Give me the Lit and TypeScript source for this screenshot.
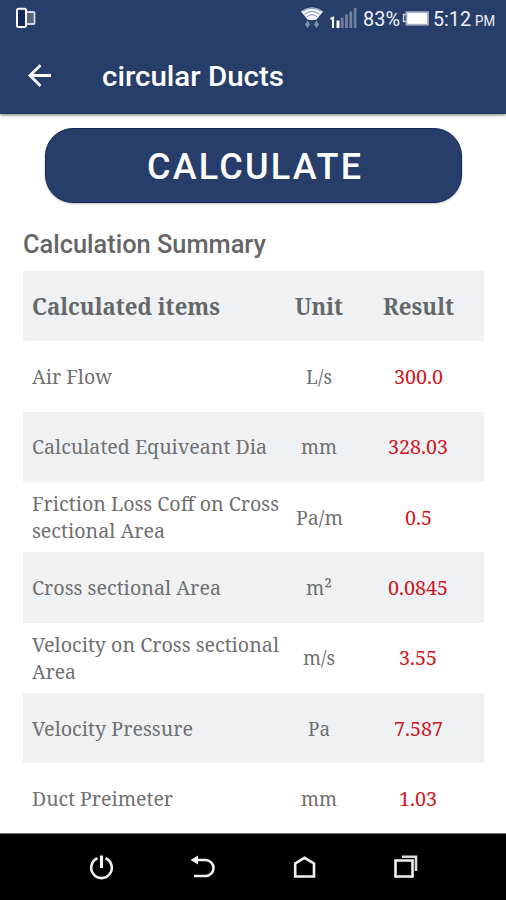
import { LitElement, html, css, svg } from "lit";
import { customElement, property } from "lit/decorators.js";

type Line = [text: string, width: number];
interface Row {
  name: Line[];
  unit: Line;
  result: Line;
}

const HEADER: Row = { name: [["Calculated items", 188]], unit: ["Unit", 48], result: ["Result", 71] };
const ROWS: Row[] = [
  { name: [["Air Flow", 80]], unit: ["L/s", 26], result: ["300.0", 49] },
  { name: [["Calculated Equiveant Dia", 235]], unit: ["mm", 36], result: ["328.03", 60] },
  { name: [["Friction Loss Coff on Cross", 247], ["sectional Area", 133]], unit: ["Pa/m", 47], result: ["0.5", 27] },
  { name: [["Cross sectional Area", 189]], unit: ["m²", 26], result: ["0.0845", 60] },
  { name: [["Velocity on Cross sectional", 247], ["Area", 44]], unit: ["m/s", 32], result: ["3.55", 38] },
  { name: [["Velocity Pressure", 161]], unit: ["Pa", 22], result: ["7.587", 49] },
  { name: [["Duct Preimeter", 141]], unit: ["mm", 36], result: ["1.03", 38] },
];

/** One line of text set to an exact advance width. */
@customElement("fit-text")
export class FitText extends LitElement {
  @property() text = "";
  @property({ type: Number }) width = 0;
  @property({ type: Number }) line = 27;
  @property({ type: Number }) base = 20;

  static styles = css`
    :host { display: block; }
    svg { display: block; overflow: visible; }
    text { fill: currentColor; }
  `;

  render() {
    return html`<svg width=${this.width} height=${this.line}>
      ${svg`<text x="0" y=${this.base} textLength=${this.width} lengthAdjust="spacingAndGlyphs">${this.text}</text>`}
    </svg>`;
  }
}

@customElement("app-root")
export class AppRoot extends LitElement {
  static styles = css`
    :host {
      display: flex;
      flex-direction: column;
      width: 506px;
      height: 900px;
      overflow: hidden;
      background: #fff;
      font-family: Roboto, sans-serif;
    }
    svg { display: block; }
    .top {
      flex: none;
      height: 114px;
      background: #263e69;
      color: #fff;
      box-shadow: 0 1px 3px rgba(0, 0, 0, 0.55);
      z-index: 1;
    }
    .status {
      display: flex;
      height: 38px;
      padding: 0 11px 0 15px;
      justify-content: space-between;
    }
    .indicators { display: flex; color: #eef1f7; }
    .pct { font-size: 20px; margin-left: 6px; -webkit-text-stroke: 0.3px #eef1f7; }
    .battery { margin-left: 1px; }
    .time { font-size: 20px; margin-left: 3px; -webkit-text-stroke: 0.3px #eef1f7; }
    .pm { font-size: 15px; margin-left: 4px; -webkit-text-stroke: 0.2px #eef1f7; }
    .bar { display: flex; height: 76px; padding-left: 27px; align-items: center; }
    .title { font-size: 28px; font-weight: 500; margin-left: 51px; }
    .content { flex: 1; min-height: 0; overflow: hidden; padding: 14px 22px 0 23px; }
    .calc {
      display: flex;
      justify-content: center;
      width: 417px;
      height: 75px;
      margin-left: 22px;
      padding: 0;
      border: 1px solid #14295a;
      box-sizing: border-box;
      border-radius: 28px;
      background: #263e69;
      color: #fff;
      font: 500 36px Roboto, sans-serif;
      box-shadow: 0 1px 2px rgba(0, 0, 0, 0.25);
    }
    .summary { margin-top: 27px; font-size: 25px; font-weight: 500; color: #666; -webkit-text-stroke: 0.25px #666; }
    .table { margin-top: 11px; font-family: "Noto Serif", "DejaVu Serif Condensed", "DejaVu Serif", serif; }
    .row {
      display: grid;
      grid-template-columns: 266px 60px 1fr;
      align-items: center;
      height: 70.35px;
      font-size: 20px;
      color: #707070;
    }
    .row:nth-child(odd) { background: #eef2f5; }
    .head { font-size: 23px; font-weight: 700; color: #656869; }
    .name { padding-left: 8.5px; }
    .unit { display: flex; justify-content: center; }
    .result { display: flex; justify-content: center; padding-left: 3px; color: #d0161c; }
    .head .result { color: inherit; }
    .nav {
      flex: none;
      display: flex;
      justify-content: space-between;
      align-items: center;
      height: 67px;
      padding: 0 87px 0 88px;
      box-sizing: border-box;
      border-top: 1px solid #777;
      background: #000;
    }
    .nav svg { fill: none; stroke: #f2f2f2; stroke-width: 2.6; }
  `;

  private row(r: Row, head = false) {
    const base = head ? 22 : 20.8;
    return html`<div class="row ${head ? "head" : ""}">
      <div class="name">${r.name.map(([t, w]) => html`<fit-text .text=${t} .width=${w} .base=${base}></fit-text>`)}</div>
      <div class="unit"><fit-text .text=${r.unit[0]} .width=${r.unit[1]} .base=${base}></fit-text></div>
      <div class="result"><fit-text .text=${r.result[0]} .width=${r.result[1]} .base=${base}></fit-text></div>
    </div>`;
  }

  render() {
    return html`
      <header class="top">
        <div class="status">
          <svg width="22" height="38" fill="none">
            <rect x="11" y="12" width="8.500" height="12" rx="1" fill="#56647f" stroke="#d5d9e5" stroke-width="1.800" />
            <rect x="2" y="8.700" width="9" height="18.300" rx="1.500" fill="#14285c" stroke="#fff" stroke-width="2" />
          </svg>
          <div class="indicators">
            <svg width="57" height="38" fill="none">
              <path d="M1 11.500Q12 3.500 23 11.500L16.500 19.500Q12 21 7.500 19.500Z" fill="#f4f6fa" />
              <path d="M2.500 11.500Q12 5 21.500 11.500M4.500 14.300Q12 8.500 19.500 14.300M6.500 17Q12 12.500 17.500 17" stroke="#7f8dab" stroke-width=".9" />
              <path d="M5 24.500l2.500-4 2.500 4-2.500 3.500zM14 24.500l2.500-4 2.500 4-2.500 3.500z" fill="#8292ad" />
              <path d="M30.500 19l2.500-1.200v10.200" stroke="#fff" stroke-width="2" />
              <path d="M38 20.500V28" stroke="#fff" stroke-width="3" />
              <path d="M42.200 17.500V28M46.500 14.500V28M50.800 11.500V28M55.100 8V28" stroke="#6f80a0" stroke-width="2.800" />
            </svg>
            <fit-text class="pct" .text=${"83%"} .width=${37} .base=${26}></fit-text>
            <svg class="battery" width="29" height="38" fill="none">
              <path d="M5.500 14.500H2.500v7H5.500" stroke="#c6cddb" stroke-width="1.500" />
              <rect x="5.500" y="12.200" width="21.500" height="12.500" fill="#fff" stroke="#a7b1c4" stroke-width="1.800" />
            </svg>
            <fit-text class="time" .text=${"5:12"} .width=${38} .base=${26}></fit-text>
            <fit-text class="pm" .text=${"PM"} .width=${20} .base=${26}></fit-text>
          </div>
        </div>
        <div class="bar">
          <svg width="24" height="24" fill="none" stroke="#fff" stroke-width="2.800">
            <path d="M24 11.500H3M13.500 1.200L3 11.500 13.500 22" />
          </svg>
          <fit-text class="title" .text=${"circular Ducts"} .width=${182} .line=${34} .base=${27}></fit-text>
        </div>
      </header>
      <main class="content">
        <button class="calc">
          <svg width="216" height="73">
            <text x="1" y="50" fill="#fff" textLength="214" lengthAdjust="spacing">CALCULATE</text>
          </svg>
        </button>
        <fit-text class="summary" .text=${"Calculation Summary"} .width=${243} .line=${30} .base=${23}></fit-text>
        <section class="table">${this.row(HEADER, true)} ${ROWS.map((r) => this.row(r))}</section>
      </main>
      <nav class="nav">
        <svg width="27" height="27"><path d="M9.500 4.300a10.300 10.300 0 1 0 8 0" /><path d="M13.500 1.500V14" stroke-width="3.200" /></svg>
        <svg width="27" height="27"><path d="M8 6h8.500a8 8 0 0 1 0 16H5" /><path d="M1.500 6L9 1.500v9z" fill="#f2f2f2" stroke="none" /></svg>
        <svg width="27" height="27"><path d="M4.200 22.500V9.500L13.500 3.800 23 9.500V22.500Z" /></svg>
        <svg width="27" height="27"><path d="M3.500 6.500H20.500V22.500H3.500Z" /><path d="M10 2.800H24V17" stroke="#ddd" /></svg>
      </nav>
    `;
  }
}
